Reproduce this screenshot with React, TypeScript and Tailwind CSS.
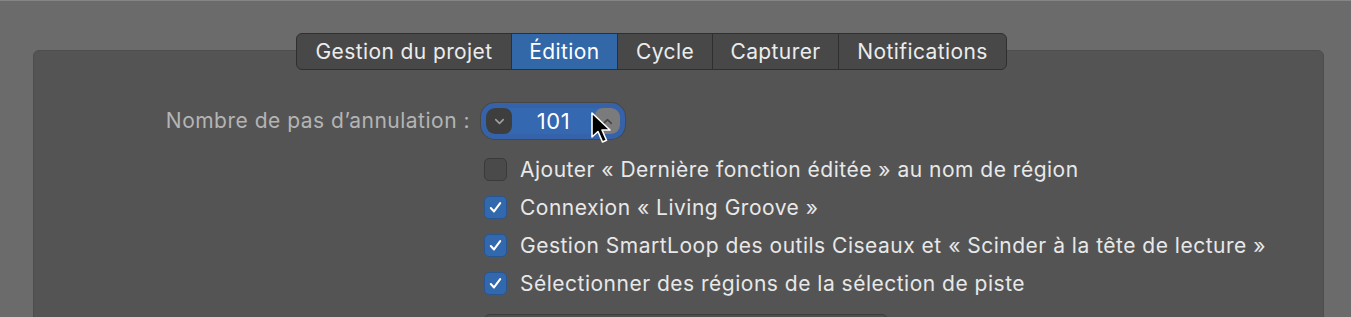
import { ChevronDown, ChevronUp } from 'lucide-react'

const tabs = [
  { label: 'Gestion du projet', w: 'w-[214px]' },
  { label: 'Édition', w: 'w-[106px]', active: true },
  { label: 'Cycle', w: 'w-[95px]' },
  { label: 'Capturer', w: 'w-[126px]' },
  { label: 'Notifications', w: 'w-[168px]' },
]

const options = [
  { label: 'Ajouter « Dernière fonction éditée » au nom de région', checked: false },
  { label: 'Connexion « Living Groove »', checked: true },
  { label: 'Gestion SmartLoop des outils Ciseaux et « Scinder à la tête de lecture »', checked: true },
  { label: 'Sélectionner des régions de la sélection de piste', checked: true },
]

function Checkbox({ checked }: { checked: boolean }) {
  if (!checked) {
    return <div className="w-[23px] h-[23px] rounded-[5px] bg-[#4a4a4a] border border-[#3a3a3a] shrink-0" />
  }
  return (
    <div className="w-[23px] h-[23px] rounded-[5px] bg-[#3268ae] border border-[#2a5690] shrink-0 flex items-center justify-center">
      <svg width="15" height="15" viewBox="0 0 16 16" fill="none">
        <path d="M3 8.6 L6.4 12.2 L13 3.4" stroke="white" strokeWidth="2.2" strokeLinecap="round" strokeLinejoin="round" />
      </svg>
    </div>
  )
}

function Cursor() {
  return (
    <svg className="absolute left-[590px] top-[110px]" width="24" height="36" viewBox="0 0 24 36">
      <path d="M2 2 L2 26 L8 20.5 L12.5 31 L16.5 29.2 L12 19 L20 19 Z" fill="black" stroke="white" strokeWidth="1.6" strokeLinejoin="round" />
    </svg>
  )
}

export default function App() {
  return (
    <div
      className="relative h-[317px] w-[1351px] overflow-hidden bg-[#6b6b6b] border-t border-[#858585] pl-[33px] pr-[27px] pt-[49px]"
      style={{ fontFamily: 'Inter, "Noto Sans", sans-serif' }}
    >
      <div className="h-[300px] rounded-[6px] bg-[#545454] border border-[#4d4d4d]">
        <div className="-mt-[18px] ml-[262px] flex h-[37px] w-fit rounded-[6px] border border-[#2f2f2f] bg-[#484848] overflow-hidden">
          {tabs.map((t, i) => (
            <div
              key={t.label}
              className={`${t.w} flex items-center justify-center text-[21px] tracking-[0.4px] ${
                t.active ? 'bg-[#3267a8] text-white' : 'text-[#ececec]'
              } ${i > 0 ? 'border-l border-[#2f2f2f]' : ''}`}
            >
              {t.label}
            </div>
          ))}
        </div>

        <div className="mt-[33px] flex items-center">
          <div className="w-[436px] text-right text-[21px] tracking-[0.5px] text-[#b4b4b4]">Nombre de pas d’annulation :</div>
          <div className="ml-[11px] flex h-[36px] w-[144px] items-center rounded-[14px] bg-[#3562a8] p-[5px] shadow-[0_0_0_1px_#474747]">
            <div className="flex h-full w-full items-center rounded-[9px] bg-[#3468b0] overflow-hidden">
              <div className="flex h-full w-[26px] items-center justify-center rounded-[8px] bg-[#3e3e3e]">
                <ChevronDown size={15} strokeWidth={2.5} className="text-[#a0a0a0]" />
              </div>
              <div className="flex-1 text-center text-[22px] tracking-[0.5px] text-white leading-none">101</div>
              <div className="flex h-full w-[25px] items-center justify-center rounded-[8px] bg-[#7b7b7b]">
                <ChevronUp size={15} strokeWidth={2.5} className="text-[#444]" />
              </div>
            </div>
          </div>
        </div>

        <div className="mt-[19px] ml-[450px] flex flex-col gap-[15px]">
          {options.map((o) => (
            <div key={o.label} className="flex h-[23px] items-center gap-[13px]">
              <Checkbox checked={o.checked} />
              <span className="text-[21px] tracking-[0.5px] text-[#e8e8e8] whitespace-nowrap">{o.label}</span>
            </div>
          ))}
        </div>

        <div className="mt-[19px] ml-[450px] h-[30px] w-[404px] rounded-[6px] border border-[#3c3c3c] bg-[#4e4e4e]" />
      </div>
      <Cursor />
    </div>
  )
}
